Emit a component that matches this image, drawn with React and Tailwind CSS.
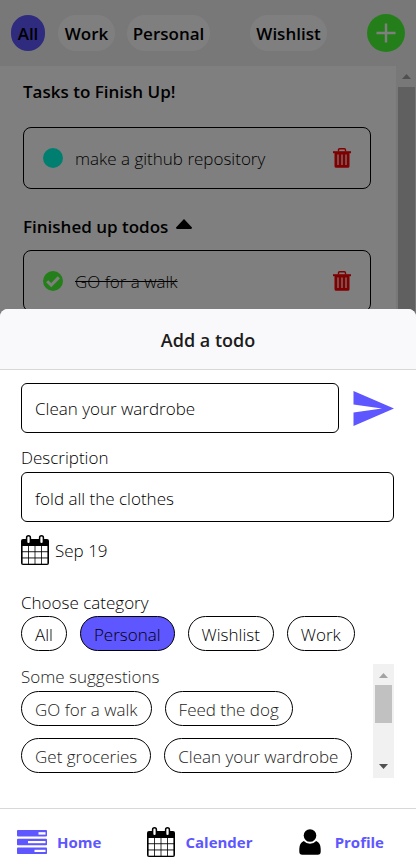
import React, { useState } from "react";

function TrashIcon() {
  return (
    <svg viewBox="0 0 18 20" className="h-5 w-[18px]" fill="none" aria-hidden="true">
      <path d="M5.5 3.5V2q0-1.2 1.2-1.2h4.6q1.2 0 1.2 1.2v1.5" stroke="#ff0000" strokeWidth="1.4" />
      <path d="M0 3.2h18v2H0z" fill="#ff0000" />
      <path
        fillRule="evenodd"
        fill="#ff0000"
        d="M1.5 4h15v14.2q0 1.6-1.6 1.6H3.1q-1.6 0-1.6-1.6zM4.4 6.5v10.600h1.200V6.500zm4 0v10.600h1.200V6.500zm4 0v10.600h1.200V6.500z"
      />
    </svg>
  );
}

function CalendarIcon() {
  return (
    <svg viewBox="0 0 28 30" className="h-[30px] w-7 shrink-0" aria-hidden="true">
      <rect x="0" y="4" width="28" height="26" rx="2" fill="#000" />
      <g fill="#fff">
        {[11, 17.2, 23.4].map((y) =>
          [1.6, 8, 14.4, 20.8].map((x) => (
            <rect key={`${x}-${y}`} x={x} y={y} width="5.6" height="5.3" />
          ))
        )}
      </g>
      <rect x="5.6" y="0.8" width="3.8" height="8" rx="1.9" fill="#fff" stroke="#000" strokeWidth="1.5" />
      <rect x="18.6" y="0.8" width="3.8" height="8" rx="1.9" fill="#fff" stroke="#000" strokeWidth="1.5" />
    </svg>
  );
}

function HomeIcon() {
  return (
    <svg viewBox="0 0 30 24" className="h-6 w-[30px]" aria-hidden="true">
      <g fill="#5e56ff">
        <rect width="30" height="6.4" rx="0.8" />
        <rect y="8.8" width="30" height="6.4" rx="0.8" />
        <rect y="17.6" width="30" height="6.4" rx="0.8" />
      </g>
      <g fill="#fff">
        <rect x="21.5" y="2.2" width="7" height="2.4" />
        <rect x="11" y="11" width="17.5" height="2.2" />
        <rect x="17.5" y="19.8" width="11" height="2.2" />
      </g>
    </svg>
  );
}

function ProfileIcon() {
  return (
    <svg viewBox="0 0 22 26" className="h-[26px] w-[22px]" aria-hidden="true">
      <circle cx="11" cy="6.5" r="6.3" />
      <path d="M4.8 12q2.6 2.8 6.2 2.8t6.2-2.8q4.5 2 4.5 8v2.5q0 3.2-3 3.2H3.3q-3 0-3-3.2V20q0-6 4.5-8z" />
    </svg>
  );
}

function Arrow({ down, className }) {
  return (
    <svg viewBox="0 0 9 5" className={`h-[5px] w-[9px] ${className}`} fill="currentColor" aria-hidden="true">
      <path d={down ? "M0 0h9L4.5 5z" : "M0 5h9L4.5 0z"} />
    </svg>
  );
}

function Todo({ title, done }) {
  return (
    <li className="flex h-[62px] items-center rounded-lg border border-black px-[19px]">
      <button aria-label={done ? "Mark as not done" : "Mark as done"} className="size-5">
        <svg viewBox="0 0 20 20" className="size-5" aria-hidden="true">
          <circle cx="10" cy="10" r="10" fill={done ? "#48ff35" : "#00ffe0"} />
          {done && <path d="M4.2 10.2l4 4 7.6-7.8" fill="none" stroke="#fff" strokeWidth="3" />}
        </svg>
      </button>
      <span className={done ? "ml-3 flex-1 pt-0.5 line-through" : "ml-3 flex-1 pt-0.5"}>{title}</span>
      <button aria-label={`Delete ${title}`}>
        <TrashIcon />
      </button>
    </li>
  );
}

function Chip({ children, active, onClick }) {
  return (
    <button
      type="button"
      onClick={onClick}
      className={`h-[35px] rounded-full border border-black px-[13px] pt-0.5 whitespace-nowrap ${active ? "bg-[#5e56ff]" : "bg-white"}`}
    >
      {children}
    </button>
  );
}

export default function App() {
  const [title, setTitle] = useState("Clean your wardrobe");
  const [description, setDescription] = useState("fold all the clothes");
  const [category, setCategory] = useState("Personal");

  return (
    <div className="relative flex h-screen flex-col overflow-hidden bg-white font-['Open_Sans','Noto_Sans',sans-serif] text-[17px] leading-6 font-light text-black">
      <header className="flex h-[66px] shrink-0 items-center bg-[#f0f0f0] px-[11px] font-semibold">
        <button className="h-9 w-[34px] rounded-full bg-[#5e56ff] pt-0.5">All</button>
        <button className="ml-[13px] h-9 w-[57px] rounded-full bg-white pt-0.5">Work</button>
        <button className="ml-3 h-9 w-[83px] rounded-full bg-white pt-0.5">Personal</button>
        <button className="ml-10 h-9 w-[77px] rounded-full bg-white pt-0.5">Wishlist</button>
        <button aria-label="Add a todo" className="ml-auto flex size-[38px] items-center justify-center rounded-full bg-[#48ff35]">
          <svg viewBox="0 0 20 20" className="size-5" aria-hidden="true">
            <path d="M10 0.5v19M0.5 10h19" stroke="#fff" strokeWidth="2.4" />
          </svg>
        </button>
      </header>

      <div className="flex min-h-0 flex-1">
        <main className="min-w-0 flex-1 overflow-hidden pt-[14px] pr-[25px] pl-[23px]">
          <h2 className="font-semibold">Tasks to Finish Up!</h2>
          <ul className="mt-[23px]">
            <Todo title="make a github repository" />
          </ul>
          <h2 className="mt-[26px] flex items-center gap-2 font-semibold">
            Finished up todos
            <svg viewBox="0 0 16 10" className="mb-1.5 h-2.5 w-4" aria-hidden="true">
              <path d="M8 0l8 8.500q0 1.500-1.500 1.500h-13Q0 10 0 8.500z" />
            </svg>
          </h2>
          <ul className="mt-[11px]">
            <Todo title="GO for a walk" done />
          </ul>
        </main>
        <div className="flex w-5 flex-col items-center bg-[#f1f1f1]" aria-hidden="true">
          <Arrow className="my-2 shrink-0 text-[#a0a0a0]" />
          <div className="h-full w-[17px] bg-[#c1c1c1]" />
        </div>
      </div>

      <div className="absolute inset-0 bg-black/50" />

      <section role="dialog" aria-label="Add a todo" className="absolute inset-x-0 bottom-0 rounded-t-lg bg-white">
        <h1 className="flex h-[61px] items-center justify-center rounded-t-lg border-b border-[#d8d8d8] bg-[#f9f9fb] pt-px text-[18px] font-semibold text-[#1c1c20]">
          Add a todo
        </h1>

        <div className="pt-[13px] pr-[22px] pl-[21px]">
          <div className="flex items-center gap-[14px]">
            <input
              aria-label="Todo title"
              value={title}
              onChange={(e) => setTitle(e.target.value)}
              className="h-[50px] min-w-0 flex-1 rounded-md border border-black px-[13px] outline-none"
            />
            <button aria-label="Save todo">
              <svg viewBox="0 0 41 35" className="h-[35px] w-[41px]" aria-hidden="true">
                <path d="M0.500 0L41 17.500 0.500 35V21.500L29 17.500 0.500 13.500z" fill="#5e56ff" />
              </svg>
            </button>
          </div>

          <label htmlFor="description" className="mt-3 block pt-px">
            Description
          </label>
          <input
            id="description"
            value={description}
            onChange={(e) => setDescription(e.target.value)}
            className="mt-0.5 h-[50px] w-full rounded-md border border-black px-[13px] pt-0.5 outline-none"
          />

          <button type="button" className="mt-[13px] flex items-center gap-1.5">
            <CalendarIcon />
            <span className="pt-0.5">Sep 19</span>
          </button>

          <p className="mt-[26px]">Choose category</p>
          <div className="mt-px flex gap-[13px]">
            {["All", "Personal", "Wishlist", "Work"].map((name) => (
              <Chip key={name} active={category === name} onClick={() => setCategory(name)}>
                {name}
              </Chip>
            ))}
          </div>

          <div className="mt-[13px] flex h-[114px]">
            <div className="min-w-0 flex-1 text-[#222]">
              <p className="pt-px">Some suggestions</p>
              <div className="mt-0.5 flex flex-wrap gap-x-[13px] gap-y-3">
                {["GO for a walk", "Feed the dog", "Get groceries", "Clean your wardrobe"].map((name) => (
                  <Chip key={name} onClick={() => setTitle(name)}>
                    {name}
                  </Chip>
                ))}
              </div>
            </div>
            <div className="flex w-[21px] flex-col items-center bg-[#f1f1f1]" aria-hidden="true">
              <Arrow className="mt-[9px] mb-[7px] text-[#a3a3a3]" />
              <div className="h-[38px] w-[17px] bg-[#c1c1c1]" />
              <Arrow down className="mt-auto mb-[9px] text-[#505050]" />
            </div>
          </div>
        </div>

        <nav className="mt-[30px] flex h-[58px] items-center justify-between border-t border-[#d8d8d8] pt-2 pr-8 pl-[17px] text-[15px] font-bold text-[#5e56ff]">
          <a href="#home" className="flex items-center gap-2.5">
            <HomeIcon />
            Home
          </a>
          <a href="#calendar" className="flex items-center gap-2.5">
            <CalendarIcon />
            Calender
          </a>
          <a href="#profile" className="flex items-center gap-3.5">
            <span className="text-black">
              <ProfileIcon />
            </span>
            Profile
          </a>
        </nav>
      </section>
    </div>
  );
}
